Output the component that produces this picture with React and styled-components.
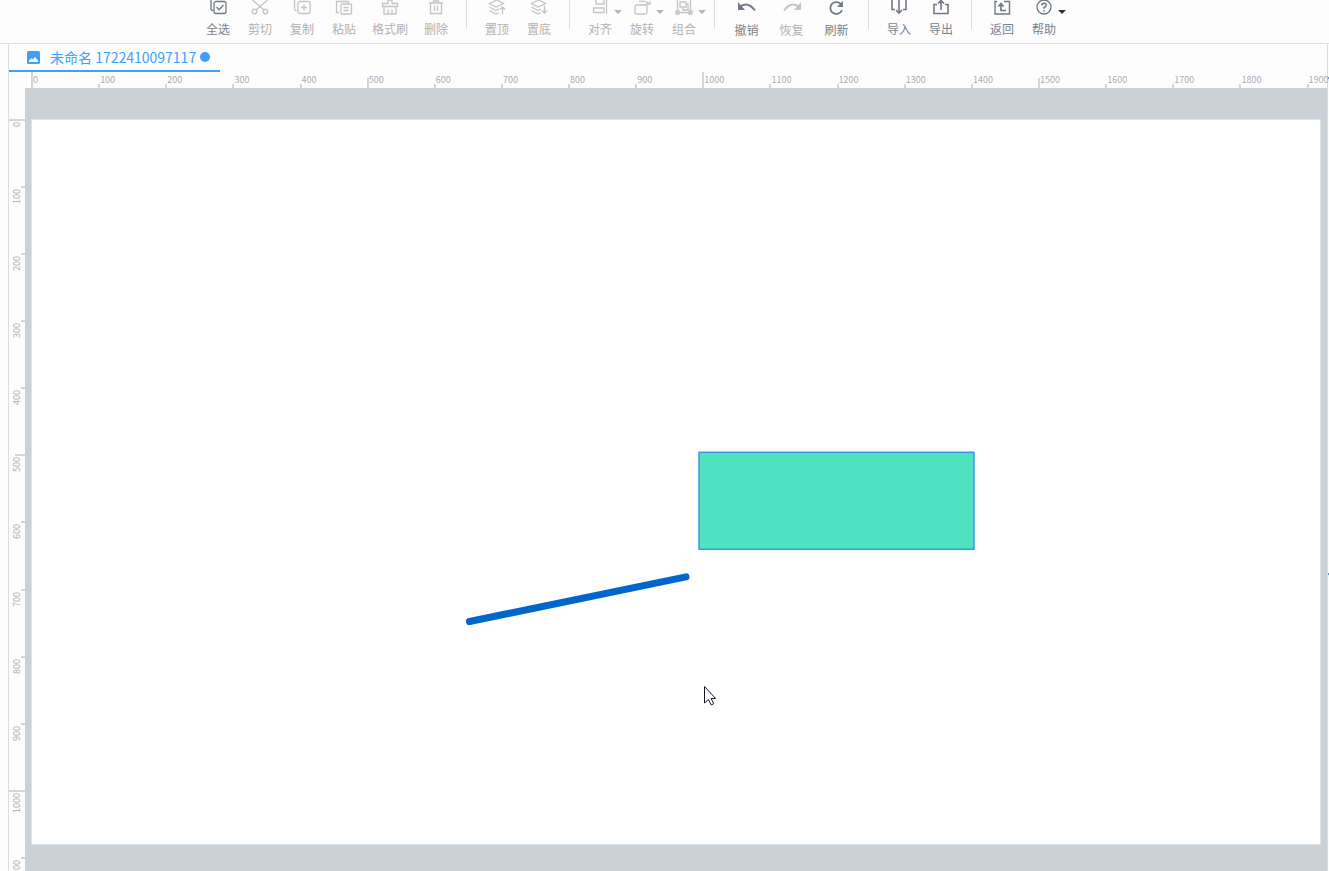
import React from 'react';
import styled, { createGlobalStyle } from 'styled-components';

const GlobalStyle = createGlobalStyle`
  * { box-sizing: border-box; }
  body {
    margin: 0;
    background: #fdfdfd;
    font-family: "Noto Sans CJK SC", sans-serif;
    font-size: 12px;
    color: #7a7f8b;
  }
`;

const Shell = styled.div`
  display: flex;
  flex-direction: column;
  height: 100vh;
  overflow: hidden;
`;

const Toolbar = styled.header`
  display: flex;
  flex: none;
  height: 44px;
  padding-left: 197px;
  border-bottom: 1px solid #dcdddf;
`;

const Tool = styled.button`
  display: flex;
  flex-direction: column;
  align-items: center;
  flex: none;
  position: relative;
  width: ${(p) => p.$width || 42}px;
  padding: ${(p) => (p.$low ? 1 : 0)}px 0 0;
  border: 0;
  background: none;
  font: inherit;
  line-height: 18px;
  white-space: nowrap;
  color: ${(p) => (p.disabled ? '#b4b0b1' : '#7a7f8b')};

  svg {
    display: block;
    flex: none;
    width: 18px;
    height: 15px;
    margin-bottom: 5px;
    color: ${(p) => (p.disabled ? '#c3c4c7' : '#727886')};
  }
`;

const Caret = styled.i`
  position: absolute;
  top: 10px;
  right: -1px;
  border: 4px solid transparent;
  border-top-color: ${(p) => (p.$muted ? '#b4b6b9' : '#303136')};
  border-bottom: 0;
`;

const Separator = styled.div`
  flex: none;
  width: 1px;
  height: 29px;
  margin: 0 9px;
  background: #dcdde0;
`;

const Body = styled.div`
  display: flex;
  flex: 1;
  min-height: 0;
  padding-left: 8px;
`;

const Workspace = styled.main`
  display: flex;
  flex-direction: column;
  flex: 1;
  min-width: 0;
  border: solid #dcdde0;
  border-width: 0 1px;
`;

const Tabs = styled.nav`
  display: flex;
  flex: none;
  height: 28px;
`;

const Tab = styled.a`
  display: flex;
  align-items: center;
  width: 211px;
  padding-left: 18px;
  border-bottom: 2px solid #409eff;
  color: #409eff;
  font-size: 14px;
  line-height: 20px;
  text-decoration: none;
  white-space: nowrap;

  svg { margin-right: 10px; }
`;

const Dot = styled.span`
  width: 10px;
  height: 10px;
  margin-left: 4px;
  border-radius: 50%;
  background: #409eff;
`;

const Editor = styled.div`
  display: grid;
  grid-template-columns: 16px minmax(0, 1fr);
  grid-template-rows: 16px minmax(0, 1fr);
  flex: 1;
  min-height: 0;
`;

const RulerX = styled.div`
  grid-column: 2;
  display: grid;
  grid-template-columns: repeat(19, 100fr) 20fr;
  align-items: end;
  padding: 0 7px 0 6px;
`;

const RulerY = styled.div`
  display: flex;
  flex-direction: column;
  align-items: flex-end;
  padding-top: 31px;
  overflow: hidden;
`;

const Label = styled.span`
  font: 9px/10px "Noto Sans CJK SC", sans-serif;
  color: #a9abb3;
`;

const MarkX = styled.div`
  display: flex;
  position: relative;
  min-width: 0;
  height: 16px;
  padding: 3px 0 0 2px;

  &::before {
    content: "";
    position: absolute;
    left: 0;
    bottom: 0;
    width: 2px;
    height: ${(p) => p.$length}px;
    background: #d3d5d7;
  }
`;

const MarkY = styled.div`
  position: relative;
  flex: none;
  width: 16px;
  height: calc((100vw - 41px) * 9 / 16 * 100 / 1080);
  padding: 3px 0 0 3px;

  &::before {
    content: "";
    position: absolute;
    top: 0;
    right: 0;
    height: 2px;
    width: ${(p) => p.$length}px;
    background: #d3d5d7;
  }

  ${Label} {
    display: block;
    writing-mode: vertical-rl;
    transform: rotate(180deg);
    width: 10px;
  }
`;

const Desk = styled.div`
  padding: 31px 6px 0;
  overflow: hidden;
  background: #cad2d8;
`;

const Page = styled.div`
  border: 1px solid #dde4e8;
  background: #fefefe;

  svg { display: block; width: 100%; height: auto; }
`;

const SidePanel = styled.aside`
  display: flex;
  flex-direction: column;
  flex: none;
  width: 1px;
  padding-top: 33px;
  gap: 494px;
`;

const Handle = styled.span`
  height: 2px;
  background: #409eff;
`;

const icons = {
  selectAll: (
    <>
      <rect x="5" y="2.500" width="12" height="12" rx="2" />
      <path d="M2 1v8.500q0 2 2 2M7.500 8l2.700 2.700 4.300-4.700" />
    </>
  ),
  cut: (
    <>
      <path d="M1.500 1L13 11M16.500 1L5 11" />
      <circle cx="3.500" cy="12.500" r="2.300" />
      <circle cx="14.500" cy="12.500" r="2.300" />
    </>
  ),
  copy: (
    <>
      <rect x="5" y="2.500" width="12" height="12" rx="2" />
      <path d="M1.500 1v8.500q0 2 2 2M11 5.500v6M8 8.500h6" />
    </>
  ),
  paste: (
    <>
      <path d="M4 13.500H1.500v-11h12v2" />
      <rect x="6" y="5" width="10.500" height="10" rx="1" />
      <path d="M8.500 8.500h5M8.500 11.500h5" />
    </>
  ),
  brush: <path d="M1.500 7.500V4.500h5.500V1h4v3.500h5.500v3zM3 7.500V15h12V7.500M7 10.500V15M11 10.500V15" />,
  remove: <path d="M2 4h14M3.500 4v10.500h11V4M7.500 6.500v5.500M10.500 6.500v5.500M6.500 4V2h5v2" />,
  toFront: <path d="M9 1L1.500 4.500 8 8l7.500-3.500L9 1M1.500 8L8 11.500l3-1.500M1.500 11.500L8 15l3-1.500M14.500 15V8M12 10.500L14.500 8l2.500 2.500" />,
  toBack: <path d="M9 1L1.500 4.500 8 8l7.500-3.500L9 1M1.500 8L8 11.500l3-1.500M1.500 11.500L8 15l3-1.500M14.500 6.500v7.500M12 11.500l2.500 2.500 2.500-2.500" />,
  align: <path d="M15.500 1v14M5 1v4h8V1M2.500 9H13v4.500H2.500z" />,
  rotate: (
    <>
      <rect x="2" y="6" width="12" height="9" rx="1.500" />
      <path d="M6 2.500q6-1.500 10 2M13 5h4V2" />
    </>
  ),
  group: (
    <>
      <path d="M2.500 1v12.500h13V1M1 12v3h3v-3zM14 12v3h3v-3z" />
      <path d="M5 3h6v5H5zM8 8v3h5V5h-2" />
    </>
  ),
  undo: (
    <>
      <path d="M2.500 6.500Q10 1 17 10.500" strokeWidth="2" />
      <path d="M0 2v8h7z" fill="currentColor" stroke="none" />
    </>
  ),
  redo: (
    <>
      <path d="M15.500 6.500Q8 1 1 10.500" strokeWidth="2" />
      <path d="M18 2v8h-7z" fill="currentColor" stroke="none" />
    </>
  ),
  refresh: (
    <>
      <path d="M13.500 5A6 6 0 1 0 14 10" strokeWidth="1.800" />
      <path d="M15 1v6H9z" fill="currentColor" stroke="none" />
    </>
  ),
  importFile: <path d="M5 10.500H2V1M13 10.500h3V1M9 1v13M6 11l3 3 3-3" strokeWidth="1.600" />,
  exportFile: <path d="M5 5.500H2v9h14v-9h-3M9 11V2M6 4.500L9 1.500l3 3" strokeWidth="1.600" />,
  back: (
    <>
      <path d="M4 2.500H2v12.500h14.500V2.500H11" strokeWidth="1.400" />
      <path d="M13 11.500H8V5M5.500 7.500L8 4.500l2.500 3" strokeWidth="1.700" />
    </>
  ),
  help: (
    <>
      <circle cx="9" cy="8" r="7" />
      <path d="M6.800 6.500q0-2.300 2.200-2.300t2.200 2q0 1.300-2.200 2.300v1.300M9 11v1.500" strokeWidth="1.500" />
    </>
  ),
};

const Icon = ({ name }) => (
  <svg viewBox="0 1 18 15" fill="none" stroke="currentColor" strokeWidth="1.300" aria-hidden="true">
    {icons[name]}
  </svg>
);

const groups = [
  [
    { icon: 'selectAll', label: '全选' },
    { icon: 'cut', label: '剪切', off: true },
    { icon: 'copy', label: '复制', off: true },
    { icon: 'paste', label: '粘贴', off: true },
    { icon: 'brush', label: '格式刷', off: true, width: 50 },
    { icon: 'remove', label: '删除', off: true },
  ],
  [
    { icon: 'toFront', label: '置顶', off: true },
    { icon: 'toBack', label: '置底', off: true },
  ],
  [
    { icon: 'align', label: '对齐', off: true, menu: true },
    { icon: 'rotate', label: '旋转', off: true, menu: true },
    { icon: 'group', label: '组合', off: true, menu: true },
  ],
  [
    { icon: 'undo', label: '撤销', width: 45, low: true },
    { icon: 'redo', label: '恢复', width: 45, low: true, off: true },
    { icon: 'refresh', label: '刷新', width: 45, low: true },
  ],
  [
    { icon: 'importFile', label: '导入' },
    { icon: 'exportFile', label: '导出' },
  ],
  [
    { icon: 'back', label: '返回' },
    { icon: 'help', label: '帮助', menu: true },
  ],
];

const range = (count) => Array.from({ length: count }, (_, i) => i * 100);

const tickLength = (value, middle) => {
  if (value % 1000 === 0) return 16;
  return value % 500 === 0 ? middle : 4;
};

export default function App() {
  return (
    <Shell>
      <GlobalStyle />
      <Toolbar>
        {groups.map((tools, i) => (
          <React.Fragment key={i}>
            {i > 0 && <Separator />}
            {tools.map((t) => (
              <Tool key={t.label} type="button" disabled={t.off} $width={t.width} $low={t.low}>
                <Icon name={t.icon} />
                {t.label}
                {t.menu && <Caret $muted={t.off} />}
              </Tool>
            ))}
          </React.Fragment>
        ))}
      </Toolbar>
      <Body>
        <Workspace>
          <Tabs>
            <Tab href="#drawing">
              <svg width="13" height="13" viewBox="0 0 13 13" aria-hidden="true">
                <rect width="13" height="13" rx="1.500" fill="#409eff" />
                <path d="M2 11V9.500L4.500 7l1.500 1.500L8 6l3 3.500V11z" fill="#fff" />
              </svg>
              未命名 1722410097117
              <Dot />
            </Tab>
          </Tabs>
          <Editor>
            <RulerX>
              {range(20).map((v) => (
                <MarkX key={v} $length={tickLength(v, 10)}>
                  <Label>{v}</Label>
                </MarkX>
              ))}
            </RulerX>
            <RulerY>
              {range(12).map((v) => (
                <MarkY key={v} $length={tickLength(v, 10)}>
                  <Label>{v}</Label>
                </MarkY>
              ))}
            </RulerY>
            <Desk>
              <Page>
                <svg viewBox="0 0 1288 724" role="img" aria-label="画布">
                  <rect x="667" y="332.300" width="275" height="97" fill="#50e3c2" stroke="#3a9bdc" strokeWidth="1.500" />
                  <path d="M437.500 501.500L654 456.900" stroke="#0066cc" strokeWidth="7" strokeLinecap="round" />
                  <path d="M672.500 566.500v16.500l3.800-3.500 3 5.500 2.400-1.300-2.600-5.200h4.500z" fill="#fff" stroke="#15151f" strokeWidth="1" />
                </svg>
              </Page>
            </Desk>
          </Editor>
        </Workspace>
        <SidePanel>
          <Handle />
          <Handle />
        </SidePanel>
      </Body>
    </Shell>
  );
}
